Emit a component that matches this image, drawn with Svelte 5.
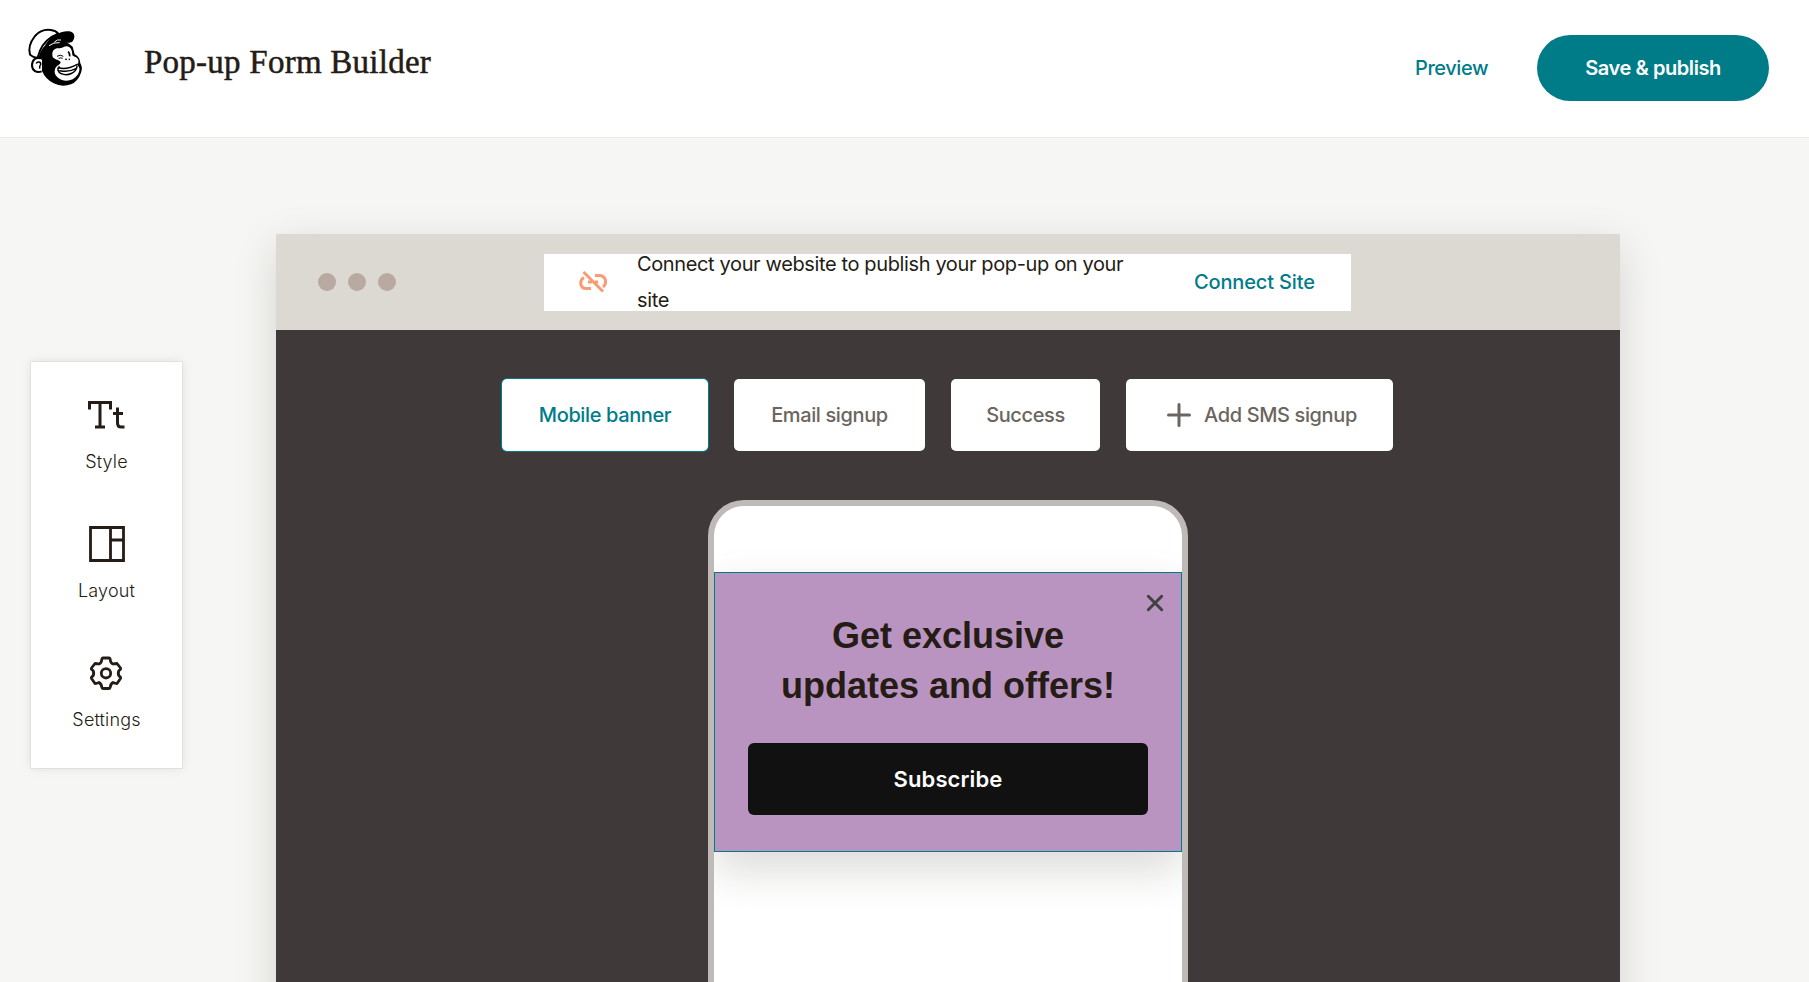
<script>
  let active = 'Mobile banner';

  const tabs = [
    { label: 'Mobile banner', name: 'mobile' },
    { label: 'Email signup', name: 'email' },
    { label: 'Success', name: 'success' },
    { label: 'Add SMS signup', name: 'sms', plus: true },
  ];
</script>

<div class="page">
  <header>
    <svg class="logo" viewBox="0 0 240 225" width="80" height="75">
      <!-- head -->
      <path d="M56 114C60 88 80 68 102 58L140 66L158 80L164 103Q180 110 181 130Q189 142 183 158Q174 184 153 193Q126 203 101 190Q76 177 66 153Z" fill="#000" />
      <!-- face -->
      <path d="M97 104C96 91 105 84 116 85C126 86 132 79 140 79C151 79 157 90 157 106C162 111 172 111 175 120C177 128 172 134 174 138C181 144 179 154 173 164C162 180 142 186 124 179C109 173 101 161 105 148C107 138 117 136 122 128C120 120 108 120 102 115C98 112 97 108 97 104Z" fill="#fff" />
      <!-- ear -->
      <path d="M66 120C52 108 36 117 36 136C36 154 52 162 66 152Z" fill="#fff" />
      <path d="M60 115C48 111 36 120 36 136C36 152 50 160 65 154" fill="none" stroke="#000" stroke-width="6" />
      <path d="M49 131C51 123 63 125 62 133C61 138 56 138 60 146" fill="none" stroke="#000" stroke-width="4.500" />
      <!-- cap -->
      <path d="M50 114C43 112 36 110 30 104C25 87 30 67 45 48C58 33 75 28 92 30C102 31 110 35 115 41C91 50 70 69 60 92C57 101 56 110 50 114Z" fill="#fff" stroke="#000" stroke-width="6" stroke-linejoin="round" />
      <path d="M76 74C92 49 122 31 148 34C163 36 168 50 158 64C149 73 139 64 122 66C104 67 92 73 82 84Z" fill="#000" />
      <path d="M87 77Q101 66 119 68M103 66Q112 57 123 60" fill="none" stroke="#fff" stroke-width="3" />
      <!-- eyes and nose -->
      <path d="M111 109Q121 102 130 109M116 115Q122 112 128 115" fill="none" stroke="#000" stroke-width="3" />
      <path d="M144 95Q150 99 149 109" fill="none" stroke="#000" stroke-width="5" />
      <circle cx="138" cy="118" r="2.800" />
      <circle cx="148" cy="118" r="2.400" />
      <!-- mouth -->
      <path d="M116 143C131 148 155 142 172 133M118 141C110 143 114 158 124 161C144 169 168 159 171 139M120 152Q144 158 168 146" fill="none" stroke="#000" stroke-width="4.500" stroke-linecap="round" />
    </svg>
    <h1>Pop-up Form Builder</h1>
    <div class="actions">
      <a class="preview" href="#preview"><span>Preview</span></a>
      <button class="publish"><span>Save &amp; publish</span></button>
    </div>
  </header>

  <main>
    <nav class="sidebar">
      <button class="tool style">
        <svg width="38" height="38" viewBox="0 0 38 38" fill="none" stroke="#241c15" stroke-width="3">
          <path d="M2.500 13.500V6.500H23.500V13.500M13 6.500V31M8 31H18" />
          <path d="M30.500 11.500V27Q30.500 31 34 31H37.500M26 17.500H36" />
        </svg>
        <span>Style</span>
      </button>
      <button class="tool layout">
        <svg width="38" height="38" viewBox="0 0 38 38" fill="none" stroke="#241c15" stroke-width="2.800">
          <path d="M2.500 2.500H35.500V35.500H2.500ZM22.500 2.500V35.500M22.500 15H35.500" />
        </svg>
        <span>Layout</span>
      </button>
      <button class="tool settings">
        <svg width="38" height="38" viewBox="0 0 38 38" fill="none" stroke="#241c15" stroke-width="2.800" stroke-linejoin="round">
          <path d="M16 4H22Q23 4 23.300 6Q23.500 9 26 10Q28 9.500 30 9.500L33.500 14Q34 15.500 32 16.500Q30.500 19.300 32 22Q34 23 33.500 24.500L30 29.500Q28 29.500 26 28.500Q23.500 30 23.300 33Q23 34.500 22 34.500H16Q15 34.500 14.700 33Q14.500 30 12 28.500Q10 29.500 8 29.500L4.500 24.500Q4 23 6 22Q7.500 19.300 6 16.500Q4 15.500 4.500 14L8 9.500Q10 9.500 12 10Q14.500 9 14.700 6Q15 4 16 4Z" />
          <circle cx="19" cy="19.300" r="4.700" />
        </svg>
        <span>Settings</span>
      </button>
    </nav>

    <section class="browser">
      <div class="bar">
        <div class="dots"><i></i><i></i><i></i></div>
        <div class="notice">
          <svg width="28" height="24" viewBox="0 0 28 24" fill="none" stroke="#fa9b73" stroke-width="3">
            <path d="M5 7.500C-.5 11 1.500 18.500 7 18.500H12M16 5.500H20C27 5.500 28.500 13.500 24 17M9 12H13M16 12H19" />
            <path d="M4.500 2L24 21.500" />
          </svg>
          <p>Connect your website to publish your pop-up on your site</p>
          <a href="#connect">Connect Site</a>
        </div>
      </div>

      <div class="canvas">
        <div class="tabs">
          {#each tabs as tab}
            <button class="tab {tab.name}" class:active={active === tab.label} on:click={() => (active = tab.label)}>
              {#if tab.plus}
                <svg width="24" height="24" viewBox="0 0 24 24" stroke="#6b6560" stroke-width="3" stroke-linecap="round">
                  <path d="M12 1.500V22.500M1.500 12H22.500" />
                </svg>
              {/if}
              <span>{tab.label}</span>
            </button>
          {/each}
        </div>

        <div class="phone">
          <div class="popup">
            <button class="close" aria-label="Close">
              <svg width="18" height="18" viewBox="0 0 18 18" stroke="#414141" stroke-width="3" stroke-linecap="round">
                <path d="M2.300 2.300L15.700 15.700M15.700 2.300L2.300 15.700" />
              </svg>
            </button>
            <h2><span>Get exclusive</span><br /><span>updates and offers!</span></h2>
            <button class="subscribe"><span>Subscribe</span></button>
          </div>
        </div>
      </div>
    </section>
  </main>
</div>

<style>
:global(body) {
  background: #f6f6f4;
  overflow: hidden;
}

.page {
  height: 982px;
  overflow: hidden;
  display: flex;
  flex-direction: column;
  font-family: Inter, "Liberation Sans", sans-serif;
  color: #241c15;
}

button {
  font: inherit;
  color: inherit;
  letter-spacing: inherit;
  border: 0;
  padding: 0;
  background: none;
  cursor: pointer;
}

a {
  color: #007c89;
  text-decoration: none;
}

span {
  white-space: nowrap;
}

header {
  box-sizing: border-box;
  height: 138px;
  flex: none;
  display: flex;
  align-items: flex-start;
  padding: 20px 40px 0 20px;
  background: #fff;
  border-bottom: 1px solid #ececea;
}

.logo {
  flex: none;
}

h1 {
  margin: 22px 0 0 44px;
  font: 400 33px/40px "Liberation Serif", serif;
  letter-spacing: .25px;
  -webkit-text-stroke: .5px #241c15;
}

.actions {
  margin: 15px 0 0 auto;
  display: flex;
  align-items: center;
  gap: 48px;
  font-size: 20px;
  font-weight: 500;
  letter-spacing: -.42px;
}

.preview {
  width: 74px;
}

.publish {
  width: 232px;
  height: 66px;
  border-radius: 33px;
  background: #007c89;
  color: #fff;
  font-weight: 600;
}

main {
  flex: 1;
  min-height: 0;
  display: flex;
  align-items: flex-start;
}

.sidebar {
  box-sizing: border-box;
  width: 151px;
  height: 406px;
  margin: 224px 94px 0 31px;
  padding-top: 34px;
  display: flex;
  flex-direction: column;
  align-items: center;
  background: #fff;
  box-shadow: 0 0 0 1px rgba(36, 28, 21, .06), 0 0 10px rgba(36, 28, 21, .1);
}

.tool {
  height: 129px;
  flex: none;
  display: flex;
  flex-direction: column;
  align-items: center;
  font-size: 18px;
  font-weight: 300;
  line-height: 28px;
  letter-spacing: .15px;
}

.tool span {
  margin-top: 14px;
}

.browser {
  width: 1344px;
  height: 900px;
  margin-top: 96px;
  box-shadow: 0 12px 40px rgba(36, 28, 21, .15);
}

.bar {
  height: 96px;
  display: flex;
  align-items: center;
  background: #dcd9d2;
}

.dots {
  display: flex;
  gap: 12px;
  margin: 0 148px 0 42px;
}

.dots i {
  width: 18px;
  height: 18px;
  border-radius: 50%;
  background: #b8a9a1;
}

.notice {
  width: 807px;
  height: 57px;
  display: flex;
  align-items: center;
  background: #fff;
  font-size: 20px;
}

.notice svg {
  flex: none;
  margin: 0 30px 0 35px;
}

.notice p {
  width: 510px;
  margin: 0 47px 0 0;
  line-height: 36px;
  letter-spacing: -.37px;
  color: #241c15;
}

.notice a {
  font-weight: 500;
  letter-spacing: -.15px;
  white-space: nowrap;
}

.canvas {
  height: 804px;
  display: flex;
  flex-direction: column;
  align-items: center;
  background: #3f3a39;
}

.tabs {
  display: flex;
  gap: 26px;
  margin: 49px 1px 0 0;
}

.tab {
  height: 72px;
  border-radius: 5px;
  display: flex;
  align-items: center;
  justify-content: center;
  gap: 13px;
  background: #fff;
  color: #6b6560;
  font-size: 20px;
  font-weight: 500;
  letter-spacing: -.38px;
}

.active {
  box-shadow: 0 0 0 1px #007c89;
  color: #007c89;
}

.mobile { width: 206px; }
.email { width: 191px; }
.success { width: 149px; }
.sms { width: 267px; }

.sms span {
  margin-right: -5px;
}

.phone {
  box-sizing: border-box;
  width: 480px;
  height: 700px;
  flex: none;
  margin-top: 49px;
  padding-top: 66px;
  border: 6px solid #bfbab7;
  border-radius: 36px;
  overflow: hidden;
  background: #fff;
}

.popup {
  position: relative;
  box-sizing: border-box;
  height: 280px;
  border: 1px solid #007c89;
  padding: 38px 33px 0;
  background: #ba94c1;
  box-shadow: 0 18px 40px rgba(36, 28, 21, .16);
}

.close {
  position: absolute;
  top: 21px;
  right: 17px;
  width: 18px;
  height: 18px;
}

.close svg {
  display: block;
}

h2 {
  margin: 0 0 32px;
  text-align: center;
  font: 700 36px/50px "Liberation Sans", Arial, sans-serif;
}

.subscribe {
  width: 400px;
  height: 72px;
  border-radius: 6px;
  background: #111;
  color: #fff;
  font-size: 22px;
  font-weight: 600;
  letter-spacing: .1px;
}
</style>
